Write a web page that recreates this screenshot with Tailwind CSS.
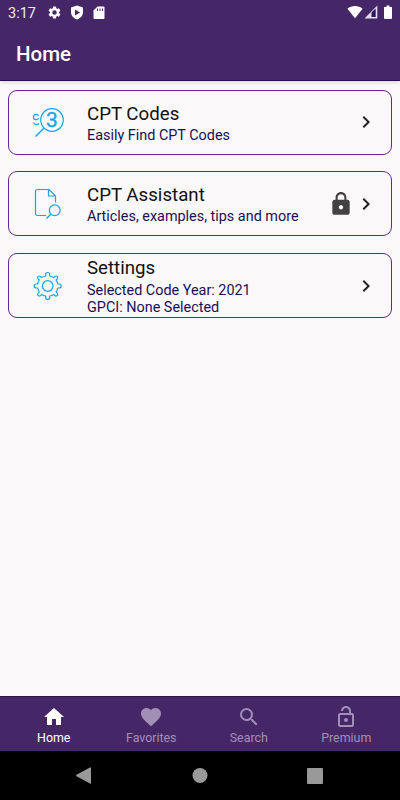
<!DOCTYPE html>
<html lang="en">
<head>
    <meta charset="UTF-8">
    <meta name="viewport" content="width=device-width, initial-scale=1.0">
    <title>Home</title>
    <script src="https://cdn.jsdelivr.net/npm/@tailwindcss/browser@4"></script>
</head>
<body class="bg-[#fbf8f9] font-[Roboto,sans-serif]">
    <div class="w-[400px] h-[800px] flex flex-col overflow-hidden">

        <!-- Status bar + title -->
        <header class="h-[81px] shrink-0 bg-[#452768] border-b border-[#2c0a55] text-white shadow-[0_1px_4px_rgba(0,0,0,0.15)]">
            <div class="h-6 pl-2 pr-1.5 flex items-center">
                <span class="w-[39px] text-[14.5px] leading-6 pt-[3px] text-[#eeeaf2]">3:17</span>
                <svg class="w-[15px] h-[15px]" viewBox="0 0 24 24" fill="#fff"><path d="M19.14 12.94c.04-.3.06-.61.06-.94s-.02-.64-.07-.94l2.03-1.58a.49.49 0 0 0 .12-.61l-1.92-3.32a.49.49 0 0 0-.59-.22l-2.39.96a7 7 0 0 0-1.62-.94l-.36-2.54A.48.48 0 0 0 13.92 2.4h-3.84a.48.48 0 0 0-.47.41l-.36 2.54c-.59.24-1.13.57-1.62.94l-2.39-.96a.49.49 0 0 0-.59.22L2.74 8.87a.48.48 0 0 0 .12.61l2.03 1.58c-.05.3-.09.63-.09.94s.02.64.07.94l-2.03 1.58a.49.49 0 0 0-.12.61l1.92 3.32c.12.22.37.29.59.22l2.39-.96c.5.38 1.03.7 1.62.94l.36 2.54c.05.24.24.41.48.41h3.84c.24 0 .44-.17.47-.41l.36-2.54c.59-.24 1.13-.56 1.62-.94l2.39.96c.22.08.47 0 .59-.22l1.92-3.32a.48.48 0 0 0-.12-.61zM12 15.6A3.6 3.6 0 1 1 12 8.4a3.6 3.6 0 0 1 0 7.2z"/></svg>
                <svg class="ml-2 w-[14px] h-[15px]" viewBox="0 0 14 15"><path fill="#fff" d="M7 .5 13 2.6V7c0 3.600-2.500 6.400-6 7.500C3.500 13.400 1 10.600 1 7V2.600z"/><path fill="#452768" d="M5 4.500 10 7.500 5 10.500z"/></svg>
                <svg class="ml-2 w-[14px] h-[15px]" viewBox="0 0 14 15"><path fill="#fff" d="M5.500 1.500H11.500a1 1 0 0 1 1 1V13a1 1 0 0 1-1 1h-9a1 1 0 0 1-1-1V5.500z"/><path stroke="#452768" d="M5.500 3.500V6M8 3.500V6M10.500 3.500V6"/></svg>
                <div class="ml-auto flex items-center">
                    <svg class="w-4 h-[14px]" viewBox="0 0 16 14"><path fill="#fff" d="M8 13.300.4 3.700C4.500.2 11.500.2 15.600 3.700z"/></svg>
                    <svg class="ml-px w-[14px] h-[14px]" viewBox="0 0 14 14"><path fill="#e4deeb" d="M13.300.5V13.500H.5z"/><path fill="#2e1560" d="M7.500 7.500 11.700 3.500V12H7.500z"/></svg>
                    <svg class="ml-[5px] mr-px w-[10px] h-[14px]" viewBox="0 0 10 14"><path fill="#fff" d="M3.500.5h3V2H9v11a1 1 0 0 1-1 1H2a1 1 0 0 1-1-1V2h2.500z"/></svg>
                </div>
            </div>
            <h1 class="pl-4 pt-[15px] text-[20.5px] leading-[30px] font-medium">Home</h1>
        </header>

        <main class="flex-1 px-2 pt-[9px] flex flex-col">
            <div class="h-[65px] border border-[#64259a] rounded-[9px] flex items-center">
                <svg class="ml-[21px] -mt-0.5 w-10 h-10 shrink-0" viewBox="0 0 40 40" fill="none" stroke="#1ba3e8" stroke-width="1.200">
                    <circle cx="22" cy="18" r="11.300"/>
                    <path stroke-width="1.500" d="M14 26 5.500 34.500"/>
                    <path d="M8.500 14C8 12 3.500 11.500 3.500 15.200c0 3.200 4.500 3.200 5 .800M3.500 20.500c.500 2.500 4 2.500 5.500 1"/>
                    <text x="22" y="25.300" text-anchor="middle" font-family="Roboto" font-size="21" fill="#1ba3e8" stroke="#1ba3e8" stroke-width=".300">3</text>
                </svg>
                <div class="ml-[17px]">
                    <div class="text-[18.7px] leading-6 text-[#111]">CPT Codes</div>
                    <div class="text-[14.4px] leading-[18px] pt-px -mb-px text-[#1c0f54]">Easily Find CPT Codes</div>
                </div>
                <svg class="ml-auto mr-[13px] -mt-0.5 w-6 h-6" viewBox="0 0 24 24" fill="#222"><path d="M10 6 8.590 7.410 13.170 12l-4.580 4.590L10 18l6-6z"/></svg>
            </div>

            <div class="mt-4 h-[65px] border border-[#64259a] rounded-[9px] flex items-center">
                <svg class="ml-[21px] w-10 h-10 shrink-0" viewBox="0 0 40 40" fill="none" stroke="#1ba3e8" stroke-width="1.200">
                    <path d="M16 31.500H7.500a2 2 0 0 1-2-2V7.500a2 2 0 0 1 2-2H19L25.500 12V18.500M18.500 5.500V12H25.500"/>
                    <circle cx="24.700" cy="26.300" r="5.400"/>
                    <path stroke-width="1.500" d="M20.800 30.200 16.500 34.500"/>
                </svg>
                <div class="ml-[17px] pt-px">
                    <div class="text-[18.7px] leading-6 text-[#111]">CPT Assistant</div>
                    <div class="text-[14.4px] leading-[18px] pt-px -mb-px text-[#1c0f54]">Articles, examples, tips and more</div>
                </div>
                <svg class="ml-auto w-[26px] h-[26px]" viewBox="0 0 24 24" fill="#424242"><path d="M18 8h-1V6c0-2.760-2.240-5-5-5S7 3.240 7 6v2H6c-1.100 0-2 .9-2 2v10c0 1.100.9 2 2 2h12c1.100 0 2-.9 2-2V10c0-1.100-.9-2-2-2zm-6 9c-1.100 0-2-.9-2-2s.9-2 2-2 2 .9 2 2-.9 2-2 2zm3.100-9H8.900V6c0-1.710 1.390-3.100 3.100-3.100s3.100 1.390 3.100 3.100z"/></svg>
                <svg class="mr-[13px] w-6 h-6" viewBox="0 0 24 24" fill="#222"><path d="M10 6 8.590 7.410 13.170 12l-4.580 4.590L10 18l6-6z"/></svg>
            </div>

            <div class="mt-[17px] h-[65px] border border-[#64259a] rounded-[9px] flex items-center">
                <svg class="ml-[21px] w-10 h-10 shrink-0" viewBox="0 0 40 40" fill="none" stroke="#1ba3e8" stroke-width="1.200">
                    <circle cx="17.700" cy="20" r="5.300"/>
                    <path stroke-linejoin="round" d="M15.700 8.500Q15.700 6.500 17.700 6.500T19.700 8.500V10Q22 10.500 23.700 11.600L24.700 10.500Q26.200 9.500 27.300 10.500T27.200 13L26.100 14Q27.300 15.800 27.700 18H29Q31.200 18 31.200 20T29 22H27.700Q27.300 24.200 26.100 26L27.200 27Q28.300 28.500 27.300 29.500T24.700 29.500L23.700 28.400Q22 29.500 19.700 30V31.500Q19.700 33.500 17.700 33.500T15.700 31.500V30Q13.400 29.500 11.700 28.400L10.700 29.500Q9.200 30.500 8.100 29.500T8.200 27L9.300 26Q8.100 24.200 7.700 22H6.400Q4.200 22 4.200 20T6.400 18H7.700Q8.100 15.800 9.300 14L8.200 13Q7.100 11.500 8.100 10.500T10.700 10.500L11.700 11.600Q13.400 10.500 15.700 10Z"/>
                </svg>
                <div class="ml-[17px]">
                    <div class="text-[18.7px] leading-6 text-[#111]">Settings</div>
                    <div class="text-[14.4px] leading-[17px] text-[#1c0f54] pt-0.5">Selected Code Year: 2021<br>GPCI: None Selected</div>
                </div>
                <svg class="ml-auto mr-[13px] w-6 h-6" viewBox="0 0 24 24" fill="#222"><path d="M10 6 8.590 7.410 13.170 12l-4.580 4.590L10 18l6-6z"/></svg>
            </div>
        </main>

        <!-- Tab bar -->
        <nav class="h-[55px] shrink-0 bg-[#452768] border-t border-[#2c1545] pl-[5px] pr-[5px] grid grid-cols-4 text-[12.4px] leading-[18px] text-[#a28fb5]">
            <div class="flex flex-col items-center pt-2 text-white">
                <svg class="w-6 h-6" viewBox="0 0 24 24" fill="currentColor"><path d="M10 20v-6h4v6h5v-8h3L12 3 2 12h3v8z"/></svg>
                <span>Home</span>
            </div>
            <div class="flex flex-col items-center pt-2">
                <svg class="w-6 h-6" viewBox="0 0 24 24" fill="currentColor"><path d="m12 21.350-1.450-1.320C5.400 15.360 2 12.280 2 8.500 2 5.420 4.420 3 7.500 3c1.740 0 3.410.81 4.500 2.090C13.090 3.810 14.760 3 16.500 3 19.580 3 22 5.420 22 8.500c0 3.780-3.400 6.860-8.550 11.540z"/></svg>
                <span>Favorites</span>
            </div>
            <div class="flex flex-col items-center pt-2">
                <svg class="w-6 h-6" viewBox="0 0 24 24" fill="currentColor"><path d="M15.500 14h-.79l-.28-.27A6.470 6.470 0 0 0 16 9.500 6.500 6.500 0 1 0 9.500 16c1.610 0 3.090-.59 4.230-1.570l.27.28v.79l5 4.990L20.490 19zm-6 0C7.010 14 5 11.990 5 9.500S7.010 5 9.500 5 14 7.010 14 9.500 11.990 14 9.500 14z"/></svg>
                <span>Search</span>
            </div>
            <div class="flex flex-col items-center pt-2">
                <svg class="w-6 h-6" viewBox="0 0 24 24" fill="currentColor"><path d="M18 8h-1V6c0-2.760-2.240-5-5-5S7 3.240 7 6h1.900c0-1.710 1.390-3.100 3.100-3.100s3.100 1.390 3.100 3.100v2H6c-1.100 0-2 .9-2 2v10c0 1.100.9 2 2 2h12c1.100 0 2-.9 2-2V10c0-1.100-.9-2-2-2zm0 12H6V10h12zm-6-3a2 2 0 1 0 0-4 2 2 0 0 0 0 4z"/></svg>
                <span>Premium</span>
            </div>
        </nav>

        <!-- Android system buttons -->
        <div class="h-[49px] shrink-0 bg-black text-[#999]">
            <svg class="w-[400px] h-[49px]" viewBox="0 0 400 49" fill="currentColor">
                <path d="M90 16.500Q91 16 91 17V32Q91 33 90 32.500L76.500 25.300Q75.500 24.500 76.500 23.800z"/>
                <circle cx="200" cy="24.500" r="7.500"/>
                <rect x="307" y="17" width="16" height="16" rx="1"/>
            </svg>
        </div>
    </div>
</body>
</html>
